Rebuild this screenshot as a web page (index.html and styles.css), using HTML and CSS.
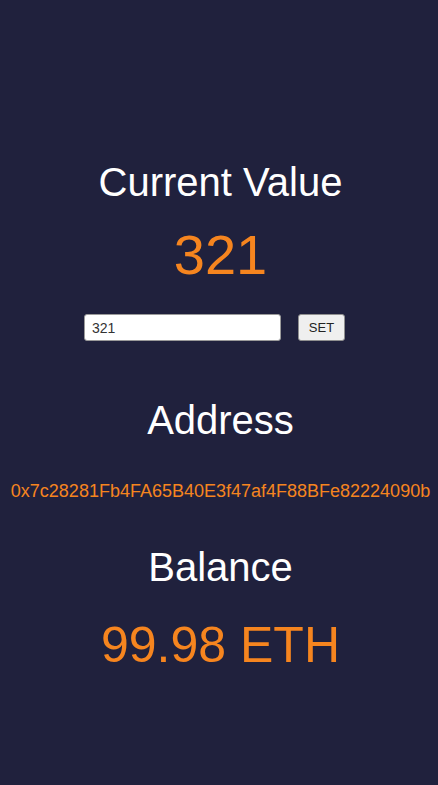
FILE: index.html
```html
<!DOCTYPE html>
<html>
<head>
<meta charset="utf-8">
<link rel="stylesheet" href="styles.css">
</head>
<body>
<main class="app">
  <h1 class="label label-current">Current Value</h1>
  <div class="value value-big">321</div>
  <div class="form-row">
    <input class="text-input" type="text" value="321">
    <button class="set-btn">SET</button>
  </div>
  <h2 class="label label-address">Address</h2>
  <div class="address">0x7c28281Fb4FA65B40E3f47af4F88BFe82224090b</div>
  <h2 class="label label-balance">Balance</h2>
  <div class="value value-balance">99.98 ETH</div>
</main>
</body>
</html>
```
FILE: styles.css
```css
html, body {
  margin: 0;
  padding: 0;
  background: #20213d;
  height: 100%;
}
body {
  font-family: "Liberation Sans", Arial, sans-serif;
}
.app {
  display: flex;
  flex-direction: column;
  align-items: center;
  padding-top: 158px;
  padding-left: 3px;
}
.label {
  margin: 0;
  font-weight: normal;
  font-size: 40px;
  line-height: 48px;
  color: #ffffff;
}
.value {
  color: #f6851f;
}
.value-big {
  margin-top: 17px;
  font-size: 56px;
  line-height: 64px;
}
.form-row {
  margin-top: 27px;
  display: flex;
  align-items: center;
  gap: 17px;
  padding-right: 12px;
  height: 27px;
}
.text-input {
  box-sizing: border-box;
  width: 197px;
  height: 27px;
  border: 1px solid #9a9a9a;
  border-radius: 3px;
  background: #fff;
  padding: 0 7px;
  font-family: "Liberation Sans", Arial, sans-serif;
  font-size: 14px;
  color: #333;
}
.set-btn {
  box-sizing: border-box;
  width: 47px;
  height: 27px;
  border: 1px solid #8f8f8f;
  border-radius: 3px;
  background: #efefef;
  font-family: "Liberation Sans", Arial, sans-serif;
  font-size: 13px;
  color: #222;
  padding: 0;
}
.label-address {
  margin-top: 55px;
}
.address {
  margin-top: 36px;
  font-size: 18px;
  line-height: 22px;
  color: #f6851f;
  white-space: nowrap;
}
.label-balance {
  margin-top: 41px;
}
.value-balance {
  margin-top: 25px;
  font-size: 50px;
  line-height: 58px;
}
```
